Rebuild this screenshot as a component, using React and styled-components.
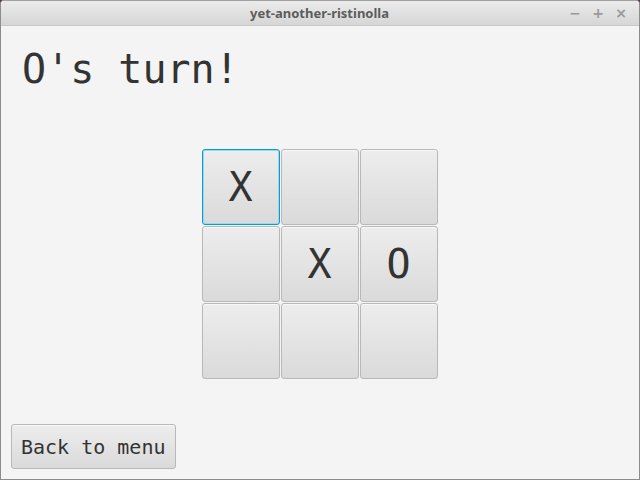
import React from "react";
import styled, { createGlobalStyle } from "styled-components";

const GlobalStyle = createGlobalStyle`
  html, body {
    margin: 0;
    padding: 0;
    background: #5b2a4c;
  }
  #root {
    width: 640px;
    height: 480px;
  }
`;

const board = [
  ["X", "", ""],
  ["", "X", "O"],
  ["", "", ""],
];

const App = () => {
  return (
    <>
      <GlobalStyle />
      <Window>
        <TitleBar>
          <Title>yet-another-ristinolla</Title>
          <Controls>
            <Control>&#8722;</Control>
            <Control>+</Control>
            <Control>&#215;</Control>
          </Controls>
        </TitleBar>
        <Content>
          <Heading>O's turn!</Heading>
          <BoardArea>
            <Board>
              {board.map((row, r) =>
                row.map((mark, c) => (
                  <Cell key={`${r}-${c}`} $focused={r === 0 && c === 0}>
                    {mark}
                  </Cell>
                ))
              )}
            </Board>
          </BoardArea>
          <MenuButton>Back to menu</MenuButton>
        </Content>
      </Window>
    </>
  );
};

const Window = styled.div`
  box-sizing: border-box;
  width: 640px;
  height: 480px;
  display: flex;
  flex-direction: column;
  border: 1px solid #8c8c8c;
  border-top-color: #a0a0a0;
  border-radius: 4px 4px 0 0;
  background: #f4f4f4;
  overflow: hidden;
`;

const TitleBar = styled.div`
  position: relative;
  height: 24px;
  flex: none;
  display: flex;
  align-items: center;
  justify-content: center;
  background: linear-gradient(#ebebeb, #d6d6d6);
  border-bottom: 1px solid #c8c8c8;
`;

const Title = styled.div`
  font-family: "Noto Sans", "DejaVu Sans", sans-serif;
  font-weight: 700;
  font-size: 13px;
  color: #5c5c5c;
  margin-right: 1px;
`;

const Controls = styled.div`
  position: absolute;
  right: 12px;
  top: 0;
  height: 24px;
  display: flex;
  align-items: center;
  gap: 11px;
`;

const Control = styled.span`
  width: 12px;
  text-align: center;
  font-family: "DejaVu Sans", sans-serif;
  font-weight: 700;
  font-size: 14px;
  color: #9a9a9a;
`;

const Content = styled.div`
  flex: 1;
  display: flex;
  flex-direction: column;
  padding: 20px 0 10px 10px;
`;

const Heading = styled.div`
  font-family: "DejaVu Sans Mono", monospace;
  font-size: 40px;
  line-height: 46px;
  color: #333333;
  padding-left: 11px;
`;

const BoardArea = styled.div`
  flex: 1;
  display: flex;
  justify-content: center;
  align-items: flex-start;
  padding-top: 57px;
  padding-right: 11px;
`;

const Board = styled.div`
  display: grid;
  grid-template-columns: repeat(3, 78px);
  grid-template-rows: repeat(3, 76px);
  gap: 1px;
`;

const Cell = styled.div`
  box-sizing: border-box;
  display: flex;
  align-items: center;
  justify-content: center;
  border: 1px solid ${(p) => (p.$focused ? "#039ed3" : "#b8b8b8")};
  box-shadow: ${(p) =>
    p.$focused ? "inset 0 0 0 1px #9fd6ec" : "inset 0 1px 0 #f8f8f8"};
  border-radius: 3px;
  background: linear-gradient(#ededed, #dadada);
  font-family: "DejaVu Sans Mono", monospace;
  font-size: 40px;
  color: #333333;
`;

const MenuButton = styled.div`
  box-sizing: border-box;
  align-self: flex-start;
  width: 165px;
  height: 45px;
  display: flex;
  align-items: center;
  padding-left: 9px;
  border: 1px solid #b8b8b8;
  border-radius: 3px;
  background: linear-gradient(#ededed, #dadada);
  box-shadow: inset 0 1px 0 #f8f8f8;
  font-family: "DejaVu Sans Mono", monospace;
  font-size: 20px;
  color: #333333;
`;

export default App;
